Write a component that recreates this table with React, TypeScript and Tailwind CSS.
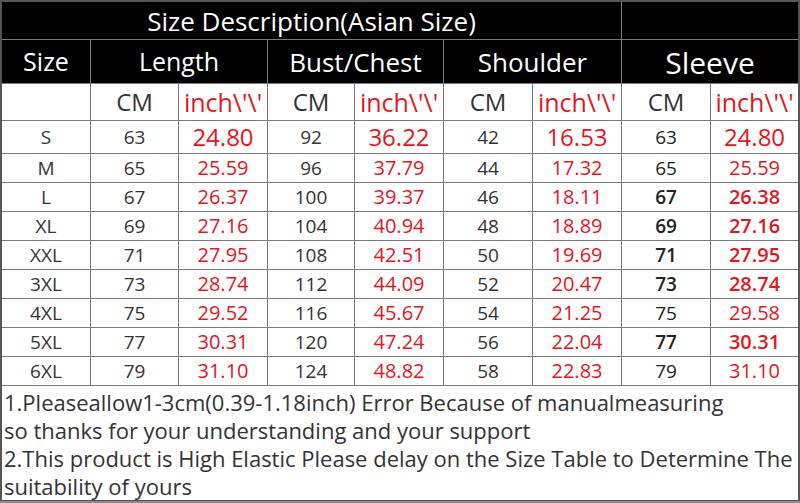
const rows: [string, string, string, string, string, string, string, string, string, boolean][] = [
  ["S", "63", "24.80", "92", "36.22", "42", "16.53", "63", "24.80", false],
  ["M", "65", "25.59", "96", "37.79", "44", "17.32", "65", "25.59", false],
  ["L", "67", "26.37", "100", "39.37", "46", "18.11", "67", "26.38", true],
  ["XL", "69", "27.16", "104", "40.94", "48", "18.89", "69", "27.16", true],
  ["XXL", "71", "27.95", "108", "42.51", "50", "19.69", "71", "27.95", true],
  ["3XL", "73", "28.74", "112", "44.09", "52", "20.47", "73", "28.74", true],
  ["4XL", "75", "29.52", "116", "45.67", "54", "21.25", "75", "29.58", false],
  ["5XL", "77", "30.31", "120", "47.24", "56", "22.04", "77", "30.31", true],
  ["6XL", "79", "31.10", "124", "48.82", "58", "22.83", "79", "31.10", false],
];

const cell = "bg-white flex items-center justify-center leading-none";
const head = "bg-black text-white flex items-center justify-center leading-none";

export default function App() {
  return (
    <div
      className="w-[800px] h-[503px] bg-[#8a8a8a] overflow-hidden"
      style={{ fontFamily: '"Open Sans", "Liberation Sans", sans-serif' }}
    >
      <div className="grid grid-cols-[88px_87px_88px_86px_88px_88px_88px_88px_87px] grid-rows-[37px_43px_36px_32px_repeat(8,28px)_114px] gap-px bg-[#7a7a7a] border-2 border-b border-[#555]">
        {/* title row */}
        <div className={`${head} col-span-7 text-[26px]`}>Size Description(Asian Size)</div>
        <div className={`${head} col-span-2`}></div>

        {/* headings */}
        <div className={`${head} text-[25px]`}>Size</div>
        <div className={`${head} col-span-2 text-[25px]`}>Length</div>
        <div className={`${head} col-span-2 text-[26px]`}>Bust/Chest</div>
        <div className={`${head} col-span-2 text-[26px]`}>Shoulder</div>
        <div className={`${head} col-span-2 text-[30px] pt-[2px]`}>Sleeve</div>

        {/* units */}
        <div className={cell}></div>
        {[0, 1, 2, 3].map((i) => (
          <>
            <div key={`c${i}`} className={`${cell} text-[24px] text-[#333]`}>CM</div>
            <div key={`i${i}`} className={`${cell} text-[25px] text-[#e9141b]`}>inch\'\'</div>
          </>
        ))}

        {rows.map((r, ri) => {
          const big = ri === 0;
          const inch = big ? "text-[24px]" : "text-[20px]";
          return (
            <>
              <div key={`s${ri}`} className={`${cell} text-[19px] text-[#333]`}>{r[0]}</div>
              <div className={`${cell} text-[19px] text-[#333]`}>{r[1]}</div>
              <div className={`${cell} ${inch} text-[#e9141b]`}>{r[2]}</div>
              <div className={`${cell} text-[19px] text-[#333]`}>{r[3]}</div>
              <div className={`${cell} ${inch} text-[#e9141b]`}>{r[4]}</div>
              <div className={`${cell} text-[19px] text-[#333]`}>{r[5]}</div>
              <div className={`${cell} ${inch} text-[#e9141b]`}>{r[6]}</div>
              <div className={`${cell} text-[19px] text-[#222] ${r[9] ? "font-semibold" : ""}`}>{r[7]}</div>
              <div className={`${cell} ${inch} text-[#e9141b] ${r[9] ? "font-semibold" : ""}`}>{r[8]}</div>
            </>
          );
        })}

        {/* notes */}
        <div className="bg-white col-span-9 pl-[2px] pt-[2px] text-[22px] leading-[28px] text-[#333] whitespace-nowrap">
          <div>1.Pleaseallow1-3cm(0.39-1.18inch) Error Because of manualmeasuring</div>
          <div>so thanks for your understanding and your support</div>
          <div>2.This product is High Elastic Please delay on the Size Table to Determine The</div>
          <div>suitability of yours</div>
        </div>
      </div>
    </div>
  );
}
